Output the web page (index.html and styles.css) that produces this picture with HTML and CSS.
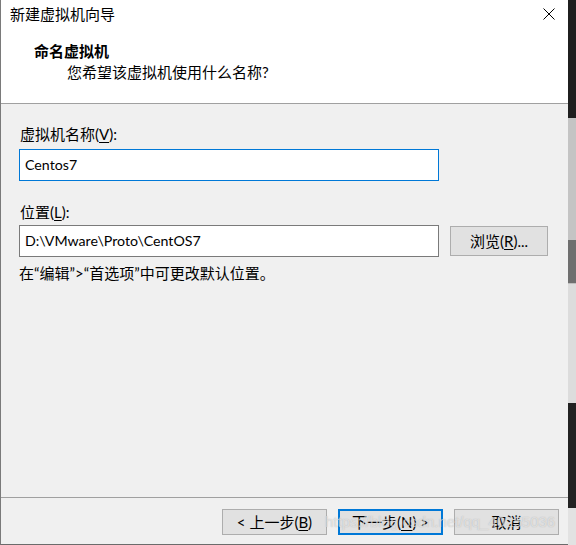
FILE: index.html
```html
<!DOCTYPE html>
<html lang="zh-CN">
<head>
<meta charset="utf-8">
<title>新建虚拟机向导</title>
<link rel="stylesheet" href="styles.css">
</head>
<body>
<div class="screen">
  <div class="dialog">
    <div class="top">
      <div class="titlebar">
        <span class="title">新建虚拟机向导</span>
        <span class="close">
          <svg width="12" height="12" viewBox="0 0 12 12"><path d="M0.5 0.5 L11.5 11.5 M11.5 0.5 L0.5 11.5" stroke="#000" stroke-width="1" fill="none"/></svg>
        </span>
      </div>
      <div class="header">
        <div class="h-title">命名虚拟机</div>
        <div class="h-sub">您希望该虚拟机使用什么名称?</div>
      </div>
    </div>
    <div class="body">
      <div class="label first">虚拟机名称(<u>V</u>):</div>
      <div class="input focused">Centos7</div>
      <div class="label second">位置(<u>L</u>):</div>
      <div class="row">
        <div class="input">D:\VMware\Proto\CentOS7</div>
        <div class="btn browse">浏览(<u>R</u>)...</div>
      </div>
      <div class="hint">在“编辑”&gt;“首选项”中可更改默认位置。</div>
    </div>
    <div class="footer">
      <div class="btn nav">&lt; 上一步(<u>B</u>)</div>
      <div class="btn nav default">下一步(<u>N</u>) &gt;</div>
      <div class="btn nav">取消</div>
    </div>
    <div class="watermark">https://blog.csdn.net/qq_40255036</div>
  </div>
  <div class="strip">
    <div class="s1"></div>
    <div class="s2"></div>
    <div class="s3"></div>
    <div class="s4"></div>
    <div class="s5"></div>
    <div class="s6"></div>
  </div>
</div>
</body>
</html>
```

FILE: styles.css
```css
html, body {
  margin: 0;
  padding: 0;
}
body {
  width: 576px;
  height: 545px;
  overflow: hidden;
  font-family: "Lato", "Noto Sans CJK SC", sans-serif;
  font-size: 15px;
  color: #000;
}
.screen {
  display: flex;
  width: 576px;
  height: 545px;
}
.dialog {
  position: relative;
  width: 567px;
  height: 544px;
  border-left: 1px solid #7a7a7a;
  border-bottom: 1px solid #6b6b6b;
  background: #f0f0f0;
  display: flex;
  flex-direction: column;
}
.top {
  background: #fff;
  height: 103px;
  border-bottom: 1px solid #a0a0a0;
}
.titlebar {
  height: 28px;
  display: flex;
  align-items: center;
  justify-content: space-between;
  padding: 0 13px 0 9px;
}
.title {
  font-size: 15px;
  line-height: 20px;
  color: #000;
}
.close {
  display: flex;
  width: 12px;
  height: 12px;
}
.header {
  padding-top: 13px;
}
.h-title {
  font-weight: bold;
  line-height: 21px;
  padding-left: 33px;
}
.h-sub {
  line-height: 21px;
  padding-left: 66px;
}
.body {
  flex: 1;
  padding: 20px 0 0 18px;
}
.label {
  line-height: 20px;
  padding-left: 1px;
}
.label.first {
  margin-bottom: 5px;
}
.label.second {
  margin-top: 21px;
  margin-bottom: 3px;
}
u {
  text-decoration-thickness: 1px;
  text-underline-offset: 2px;
}
.input {
  box-sizing: border-box;
  width: 420px;
  height: 32px;
  background: #fff;
  border: 1px solid #7a7a7a;
  padding-left: 5px;
  display: flex;
  align-items: center;
  font-size: 14.2px;
  line-height: 20px;
}
.input.focused {
  border-color: #0078d7;
}
.row {
  display: flex;
  align-items: center;
}
.btn {
  box-sizing: border-box;
  background: #e1e1e1;
  border: 1px solid #adadad;
  display: flex;
  align-items: center;
  justify-content: center;
  line-height: 20px;
}
.browse {
  width: 98px;
  height: 30px;
  margin-left: 11px;
}
.hint {
  margin-top: 6px;
  line-height: 20px;
}
.footer {
  height: 47px;
  border-top: 1px solid #a0a0a0;
  box-sizing: border-box;
  display: flex;
  justify-content: flex-end;
  align-items: flex-start;
  gap: 11px;
  padding: 11px 9px 0 0;
}
.nav {
  width: 105px;
  height: 26px;
}
.nav.default {
  border: 2px solid #0078d7;
}
.watermark {
  position: absolute;
  left: 324px;
  top: 512px;
  font-family: "Liberation Sans", sans-serif;
  font-size: 15px;
  line-height: 20px;
  color: rgba(255, 255, 255, 0.55);
  text-shadow: 0 0 1px rgba(120, 120, 120, 0.5);
  white-space: nowrap;
  pointer-events: none;
}
.strip {
  width: 8px;
  height: 545px;
  display: flex;
  flex-direction: column;
  background: #d9d9d9;
}
.s1 { height: 118px; background: #1f1f1f; }
.s2 { height: 122px; background: #c4c4c4; }
.s3 { height: 43px; background: #6f6f6f; }
.s4 { height: 119px; background: #dcdcdc; border-top: 1px solid #bdbdbd; }
.s5 { height: 105px; background: #222; }
.s6 { flex: 1; background: #e2e2e2; }
```
